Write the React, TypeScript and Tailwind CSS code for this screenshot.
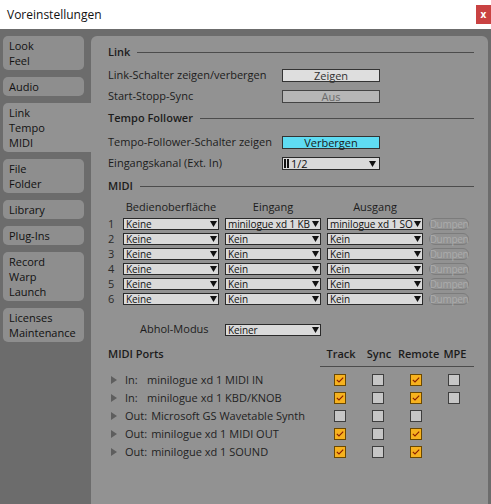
import React from "react";

const FONT = { fontFamily: '"Open Sans", "Noto Sans", sans-serif' };

type Tab = { lines: string[]; selected?: boolean };

const tabs: Tab[] = [
  { lines: ["Look", "Feel"] },
  { lines: ["Audio"] },
  { lines: ["Link", "Tempo", "MIDI"], selected: true },
  { lines: ["File", "Folder"] },
  { lines: ["Library"] },
  { lines: ["Plug-Ins"] },
  { lines: ["Record", "Warp", "Launch"] },
  { lines: ["Licenses", "Maintenance"] },
];

function Arrow() {
  return (
    <svg width="7" height="6" viewBox="0 0 7 6" className="shrink-0">
      <path d="M0 0 L7 0 L3.5 6 Z" fill="#111" />
    </svg>
  );
}

function Dropdown({ value, width }: { value: React.ReactNode; width: string }) {
  return (
    <div
      className={`flex h-[12px] items-center justify-between border border-[#2a2a2a] bg-[#dadada] pl-[2px] pr-[1px] text-[10px] leading-[10px] tracking-[-0.1px] text-[#111] ${width}`}
    >
      <span className="whitespace-nowrap">{value}</span>
      <Arrow />
    </div>
  );
}

function Heading({ label }: { label: string }) {
  return (
    <div className="flex h-[15px] items-center">
      <span className="text-[11px] font-semibold text-[#1c1c1c]">{label}</span>
      <div className="ml-[7px] h-px flex-1 bg-[#4c4c4c]" />
    </div>
  );
}

function Check({ on }: { on: boolean }) {
  if (!on)
    return <div className="h-[12px] w-[12px] border border-[#3e3e3e] bg-[#c6c6c6]" />;
  return (
    <div className="flex h-[12px] w-[12px] items-center justify-center border border-[#6b4800] bg-[#f7b21e]">
      <svg width="8" height="6" viewBox="0 0 8 6">
        <path d="M0.8 2.8 L3 5 L7.2 0.6" fill="none" stroke="#8a1c00" strokeWidth="1.1" />
      </svg>
    </div>
  );
}

const midiRows = [
  { n: 1, a: "Keine", b: "minilogue xd 1 KB", c: "minilogue xd 1 SO" },
  { n: 2, a: "Keine", b: "Kein", c: "Kein" },
  { n: 3, a: "Keine", b: "Kein", c: "Kein" },
  { n: 4, a: "Keine", b: "Kein", c: "Kein" },
  { n: 5, a: "Keine", b: "Kein", c: "Kein" },
  { n: 6, a: "Keine", b: "Kein", c: "Kein" },
];

const ports = [
  { dir: "In:", name: "minilogue xd 1 MIDI IN", checks: [true, false, true], mpe: true },
  { dir: "In:", name: "minilogue xd 1 KBD/KNOB", checks: [true, false, true], mpe: true },
  { dir: "Out:", name: "Microsoft GS Wavetable Synth", checks: [false, false, false], mpe: false },
  { dir: "Out:", name: "minilogue xd 1 MIDI OUT", checks: [true, false, true], mpe: false },
  { dir: "Out:", name: "minilogue xd 1 SOUND", checks: [true, false, true], mpe: false },
];

export default function App() {
  return (
    <div className="flex h-[504px] w-[491px] flex-col overflow-hidden bg-white" style={FONT}>
      {/* title bar */}
      <div className="flex h-[29px] shrink-0 items-center justify-between bg-white pl-[7px]">
        <span className="text-[12px] text-[#111]">Voreinstellungen</span>
        <div className="mb-[1px] flex h-[19px] w-[15px] items-center justify-center self-center bg-[#c94242] text-[10px] font-bold text-white">
          x
        </div>
      </div>

      <div className="flex flex-1 bg-[#6c6c6c] pt-[7px] pr-[3px]">
        {/* sidebar */}
        <div className="flex w-[91px] shrink-0 flex-col gap-[7px] pl-[3px]">
          {tabs.map((t) => (
            <div
              key={t.lines[0]}
              className={
                t.selected
                  ? "rounded-l-[5px] bg-[#929292] py-[2px] pl-[6px] text-[11px] leading-[15px] text-[#111]"
                  : "mr-[7px] rounded-[5px] bg-[#8e8e8e] py-[2px] pl-[6px] text-[11px] leading-[15px] text-[#111]"
              }
            >
              {t.lines.map((l) => (
                <div key={l}>{l}</div>
              ))}
            </div>
          ))}
        </div>

        {/* content */}
        <div className="flex-1 rounded-t-[6px] bg-[#929292] pl-[17px] pr-[14px] pt-[9px] text-[11px] text-[#1c1c1c]">
          <Heading label="Link" />

          <div className="mt-[9px] flex h-[13px] items-center">
            <span className="w-[174px]">Link-Schalter zeigen/verbergen</span>
            <div className="flex h-[13px] w-[98px] items-center justify-center border border-[#333] bg-[#dedede] text-[11px] leading-[11px] text-[#333]">
              Zeigen
            </div>
          </div>
          <div className="mt-[8px] flex h-[13px] items-center">
            <span className="w-[174px]">Start-Stopp-Sync</span>
            <div className="flex h-[13px] w-[98px] items-center justify-center border border-[#444] bg-[#b6b6b6] text-[11px] leading-[11px] text-[#6a6a6a]">
              Aus
            </div>
          </div>

          <div className="mt-[8px]">
            <Heading label="Tempo Follower" />
          </div>

          <div className="mt-[10px] flex h-[13px] items-center">
            <span className="w-[174px]">Tempo-Follower-Schalter zeigen</span>
            <div className="flex h-[13px] w-[98px] items-center justify-center border border-[#333] bg-[#5fdcf3] text-[11px] leading-[11px] text-[#1a1a1a]">
              Verbergen
            </div>
          </div>
          <div className="mt-[8px] flex h-[13px] items-center">
            <span className="w-[174px]">Eingangskanal (Ext. In)</span>
            <div className="flex h-[13px] w-[98px] items-center justify-between border border-[#2a2a2a] bg-[#dadada] pl-[1px] pr-[3px] text-[11px] leading-[11px] text-[#111]">
              <span className="flex items-center">
                <span className="h-[9px] w-[2px] bg-[#111]" />
                <span className="ml-[1px] h-[9px] w-[2px] bg-[#111]" />
                <span className="ml-[2px]">1/2</span>
              </span>
              <Arrow />
            </div>
          </div>

          <div className="mt-[9px]">
            <Heading label="MIDI" />
          </div>

          <div className="mt-[6px] grid grid-cols-[9px_96px_96px_96px_40px] gap-x-[6px] gap-y-[3px]">
            <div />
            <div className="flex h-[15px] items-center justify-center">Bedienoberfläche</div>
            <div className="flex h-[15px] items-center justify-center">Eingang</div>
            <div className="flex h-[15px] items-center justify-center">Ausgang</div>
            <div />
            {midiRows.map((r) => (
              <React.Fragment key={r.n}>
                <div className="flex h-[12px] items-center leading-[10px] text-[#2a2a2a]">{r.n}</div>
                <Dropdown value={r.a} width="w-[96px]" />
                <Dropdown value={r.b} width="w-[96px]" />
                <Dropdown value={r.c} width="w-[96px]" />
                <div className="flex h-[12px] items-center justify-center rounded-full border border-[#7c7c7c] text-[10px] leading-[10px] tracking-[-0.3px] text-[#acacac]">
                  Dumpen
                </div>
              </React.Fragment>
            ))}
          </div>

          <div className="mt-[18px] flex h-[13px] items-center pl-[32px]">
            <span className="w-[85px]">Abhol-Modus</span>
            <Dropdown value="Keiner" width="w-[96px]" />
          </div>

          <div className="mt-[11px] flex h-[15px] items-center">
            <span className="flex-1 font-semibold">MIDI Ports</span>
            {["Track", "Sync", "Remote", "MPE"].map((h) => (
              <span key={h} className="w-[38px] text-center font-semibold">
                {h}
              </span>
            ))}
          </div>
          <div className="mt-[4px] ml-[212px] h-px bg-[#4c4c4c]" />

          <div className="mt-[4px] flex flex-col">
            {ports.map((p) => (
              <div key={p.name} className="flex h-[18px] items-center">
                <div className="flex flex-1 items-center text-[#222]">
                  <svg width="6" height="8" viewBox="0 0 6 8" className="ml-[3px] mr-[8px]">
                    <path d="M0 0 L6 4 L0 8 Z" fill="#5e5e5e" />
                  </svg>
                  {p.dir === "In:" ? (
                    <span className="inline-block w-[22px]">In:</span>
                  ) : (
                    <span className="mr-[4px]">Out:</span>
                  )}
                  <span>{p.name}</span>
                </div>
                {p.checks.map((c, i) => (
                  <div key={i} className="flex w-[38px] justify-center pr-[3px]">
                    <Check on={c} />
                  </div>
                ))}
                <div className="flex w-[38px] justify-center pr-[3px]">
                  {p.mpe ? <Check on={false} /> : null}
                </div>
              </div>
            ))}
          </div>
        </div>
      </div>
    </div>
  );
}
